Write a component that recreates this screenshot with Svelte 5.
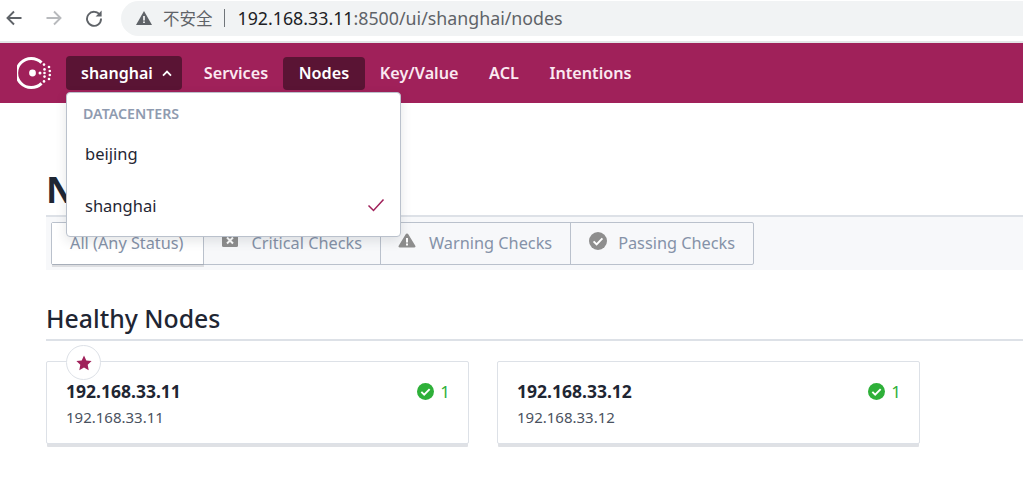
<script>
	const navItems = [
		{ label: 'Services' },
		{ label: 'Nodes', active: true },
		{ label: 'Key/Value' },
		{ label: 'ACL' },
		{ label: 'Intentions' }
	];
	const nodes = [
		{ name: '192.168.33.11', address: '192.168.33.11', checks: 1, leader: true },
		{ name: '192.168.33.12', address: '192.168.33.12', checks: 1, leader: false }
	];
</script>

{#snippet checkCircle(size, fill)}
	<svg width={size} height={size} viewBox="0 0 18 18">
		<circle cx="9" cy="9" r="9" fill={fill} />
		<path d="M4.600 9.400l3 3 5.800-6" fill="none" stroke="#fff" stroke-width="2" />
	</svg>
{/snippet}

<div class="browser">
	<button class="tool" aria-label="Back">
		<svg width="18" height="18" viewBox="0 0 18 18"><path d="M16.500 9H2.500M9 2.500L2.500 9 9 15.500" fill="none" stroke="#5f6368" stroke-width="1.900" /></svg>
	</button>
	<button class="tool" aria-label="Forward">
		<svg width="18" height="18" viewBox="0 0 18 18"><path d="M1.500 9h14M9 2.500L15.500 9 9 15.500" fill="none" stroke="#b8babd" stroke-width="1.900" /></svg>
	</button>
	<button class="tool" aria-label="Reload">
		<svg width="18" height="18" viewBox="0 0 18 18">
			<path d="M15 6.200A7 7 0 1 0 16 9.500" fill="none" stroke="#5f6368" stroke-width="1.900" />
			<path d="M16.600 1.600v6h-6z" fill="#5f6368" />
		</svg>
	</button>
	<div class="omnibox">
		<svg class="warn" width="16" height="14" viewBox="0 0 16 14"><path d="M8 0l8 14H0z" fill="#5f6368" /><path d="M7.200 5h1.600v4.400H7.200zM7.200 10.400h1.600V12H7.200z" fill="#fff" /></svg>
		<span class="insecure">不安全</span>
		<span class="divider"></span>
		<span class="url"><span class="host">192.168.33.11</span>:8500/ui/shanghai/nodes</span>
	</div>
</div>

<header class="navbar">
	<svg class="logo" width="36" height="36" viewBox="0 0 36 36">
		<path d="M24.500 7.600A14.600 14.600 0 1 0 24.500 28.400" fill="none" stroke="#fff" stroke-width="3" />
		<circle cx="15.500" cy="18" r="3.400" fill="#fff" />
		<g fill="#fff">
			<circle cx="23" cy="18" r="1.500" /><circle cx="27.500" cy="14.400" r="1.300" /><circle cx="27.500" cy="18" r="1.300" /><circle cx="27.500" cy="21.600" r="1.300" />
			<circle cx="32" cy="12" r="1.300" /><circle cx="32.800" cy="16" r="1.300" /><circle cx="32.800" cy="20" r="1.300" /><circle cx="32" cy="24" r="1.300" />
			<circle cx="27" cy="9.600" r="1.300" /><circle cx="27" cy="26.400" r="1.300" />
		</g>
	</svg>
	<div class="dc">
		<button class="dc-toggle">
			shanghai
			<svg width="10" height="7" viewBox="0 0 10 7"><path d="M1 5.600L5 1.600l4 4" fill="none" stroke="#fff" stroke-width="1.800" /></svg>
		</button>
		<div class="dc-menu">
			<div class="dc-title">DATACENTERS</div>
			<div class="dc-item">beijing</div>
			<div class="dc-item">
				shanghai
				<svg width="18" height="14" viewBox="0 0 18 14"><path d="M1.500 7.500l5 5L16.500 1.500" fill="none" stroke="#a0215a" stroke-width="1.500" /></svg>
			</div>
		</div>
	</div>
	<nav>
		{#each navItems as item}
			<a href="#top" class:active={item.active}>{item.label}</a>
		{/each}
	</nav>
</header>

<main>
	<h1>Nodes</h1>
	<div class="filters">
		<div class="tabs">
			<button class="tab first">All (Any Status)</button>
			<button class="tab critical">
				<svg width="16" height="14" viewBox="0 0 16 14"><rect width="16" height="13" rx="1.500" fill="#8e8e8e" /><path d="M5 3.500l6 6M11 3.500l-6 6" stroke="#fff" stroke-width="2" /></svg>
				Critical Checks
			</button>
			<button class="tab warning">
				<svg width="18" height="15" viewBox="0 0 18 15"><path d="M9 .5c.6 0 1 .3 1.300.8l7 11.500c.5.9 0 1.700-1 1.700H1.700c-1 0-1.500-.8-1-1.700l7-11.500C8 .8 8.400.5 9 .5z" fill="#8e8e8e" /><path d="M8 5h2v4.500H8zM8 10.500h2v2H8z" fill="#fff" /></svg>
				Warning Checks
			</button>
			<button class="tab passing">
				{@render checkCircle(18, '#8e8e8e')}
				Passing Checks
			</button>
		</div>
	</div>

	<h2>Healthy Nodes</h2>
	<div class="cards">
		{#each nodes as node}
			<div class="card">
				{#if node.leader}
					<span class="leader">
						<svg width="16" height="16" viewBox="0 0 16 16"><path d="M8 .5l2.300 5 5.300.6-3.900 3.700 1 5.400L8 12.500l-4.700 2.700 1-5.400L.4 6.100l5.300-.6z" fill="#a0215a" /></svg>
					</span>
				{/if}
				<div class="card-head">
					<strong>{node.name}</strong>
					<span class="health">
						{@render checkCircle(17, '#2eb039')}
						{node.checks}
					</span>
				</div>
				<div class="address">{node.address}</div>
			</div>
		{/each}
	</div>
</main>

<style>
	:global(body) {
		margin: 0;
		background: #fff;
		font-family: 'Noto Sans', 'Noto Sans CJK SC', sans-serif;
	}

	.browser {
		display: flex;
		align-items: center;
		height: 41px;
		padding-left: 5px;
		border-bottom: 2px solid #e4e5e7;
	}
	.tool {
		display: flex;
		background: none;
		border: 0;
		padding: 0;
		margin-right: 22px;
		margin-top: -5px;
	}
	.tool:nth-child(3) {
		margin-right: 18px;
	}
	.omnibox {
		display: flex;
		align-items: center;
		width: 100%;
		height: 35px;
		margin-top: -5px;
		padding-left: 15px;
		background: #f1f3f4;
		border-radius: 18px 0 0 18px;
		color: #5f6368;
	}
	.insecure {
		margin-left: 11px;
		font-size: 16.500px;
	}
	.divider {
		width: 1px;
		height: 18px;
		margin: 0 13px 0 11px;
		background: #70757a;
	}
	.url {
		font-size: 17.800px;
		white-space: nowrap;
	}
	.host {
		color: #202124;
	}

	.navbar {
		display: flex;
		align-items: center;
		height: 60px;
		background: #a0215a;
		padding-left: 17px;
		position: relative;
		z-index: 2;
	}
	.logo {
		flex: none;
		margin-right: 13px;
	}
	.dc {
		position: relative;
	}
	.dc-toggle {
		display: flex;
		align-items: center;
		gap: 9px;
		height: 34px;
		padding: 0 10px 0 15px;
		border: 0;
		border-radius: 4px;
		background: #5a1434;
		color: #fff;
		font: 600 16px 'Noto Sans', sans-serif;
	}
	.dc-menu {
		position: absolute;
		top: 36px;
		left: 0;
		width: 333px;
		height: 143px;
		background: #fff;
		border: 1px solid #bac1cc;
		border-radius: 4px;
		box-shadow: 0 4px 12px rgba(31, 38, 51, 0.12);
	}
	.dc-title {
		padding: 12px 15px 0 16px;
		font-size: 14.200px;
		line-height: 18px;
		font-weight: 600;
		color: #8f9bb0;
	}
	.dc-item {
		display: flex;
		align-items: center;
		justify-content: space-between;
		height: 52px;
		padding: 0 15px 0 18px;
		font-size: 16.500px;
		color: #1f2633;
	}
	.dc-title + .dc-item {
		margin-top: 4px;
	}
	nav {
		display: flex;
		margin-left: 6.700px;
	}
	nav a {
		display: flex;
		align-items: center;
		height: 33px;
		padding: 0 15.300px;
		border-radius: 4px;
		text-decoration: none;
		font-size: 16.200px;
		font-weight: 600;
		color: #fbe9f1;
	}
	nav a.active {
		background: #5a1434;
		color: #fff;
	}

	main {
		padding: 0 0 39px 46px;
	}
	h1 {
		margin: 0;
		padding-top: 62px;
		height: 50px;
		font-size: 36px;
		line-height: 50px;
		font-weight: 700;
		color: #1f2633;
		border-bottom: 2px solid #dde1e7;
	}
	.filters {
		height: 53px;
		padding: 5px 0 0 5px;
		box-sizing: border-box;
		background: #f7f8fa;
	}
	.tabs {
		display: inline-flex;
		height: 43px;
		border: 1px solid #bac1cc;
		border-radius: 2px;
		box-sizing: border-box;
	}
	.tab {
		display: flex;
		align-items: center;
		gap: 13px;
		background: none;
		border: 0;
		border-right: 1px solid #bac1cc;
		font: 400 16.300px 'Noto Sans', sans-serif;
		color: #8592a8;
		padding: 0 18px 2px;
	}
	.tab.first {
		padding: 0 19px 2px 18px;
		background: #fff;
		box-shadow: 0 3px 0 rgba(31, 38, 51, 0.12);
	}
	.tab.critical {
		gap: 14px;
	}
	.tab.warning {
		padding-left: 17px;
	}
	.tab.passing {
		gap: 11px;
	}
	.tab:last-child {
		border-right: 0;
	}
	.tab svg {
		margin-top: -4px;
	}

	h2 {
		margin: 32px 0 0;
		height: 37px;
		line-height: 33px;
		font-size: 24.800px;
		font-weight: 500;
		color: #1f2633;
		border-bottom: 2px solid #dde1e7;
	}
	.cards {
		display: grid;
		grid-template-columns: 423px 423px;
		gap: 28px;
		margin-top: 20px;
	}
	.card {
		position: relative;
		height: 83px;
		box-sizing: border-box;
		padding: 17px 18px 0 19px;
		border: 1px solid #dde1e7;
		border-radius: 2px;
		box-shadow: 0 4px 0 -1px #dfe1e5;
		background: #fff;
	}
	.leader {
		position: absolute;
		top: -17px;
		left: 19px;
		display: flex;
		align-items: center;
		justify-content: center;
		width: 35px;
		height: 35px;
		box-sizing: border-box;
		border: 1px solid #dde1e7;
		border-radius: 50%;
		background: #fff;
	}
	.card-head {
		display: flex;
		align-items: center;
		justify-content: space-between;
		height: 24px;
	}
	strong {
		font-size: 17.500px;
		font-weight: 700;
		color: #1f2633;
	}
	.health {
		display: flex;
		align-items: center;
		gap: 6px;
		font-size: 17px;
		color: #2eb039;
	}
	.address {
		margin-top: 3px;
		font-size: 15px;
		line-height: 22px;
		color: #4a5260;
	}
</style>
